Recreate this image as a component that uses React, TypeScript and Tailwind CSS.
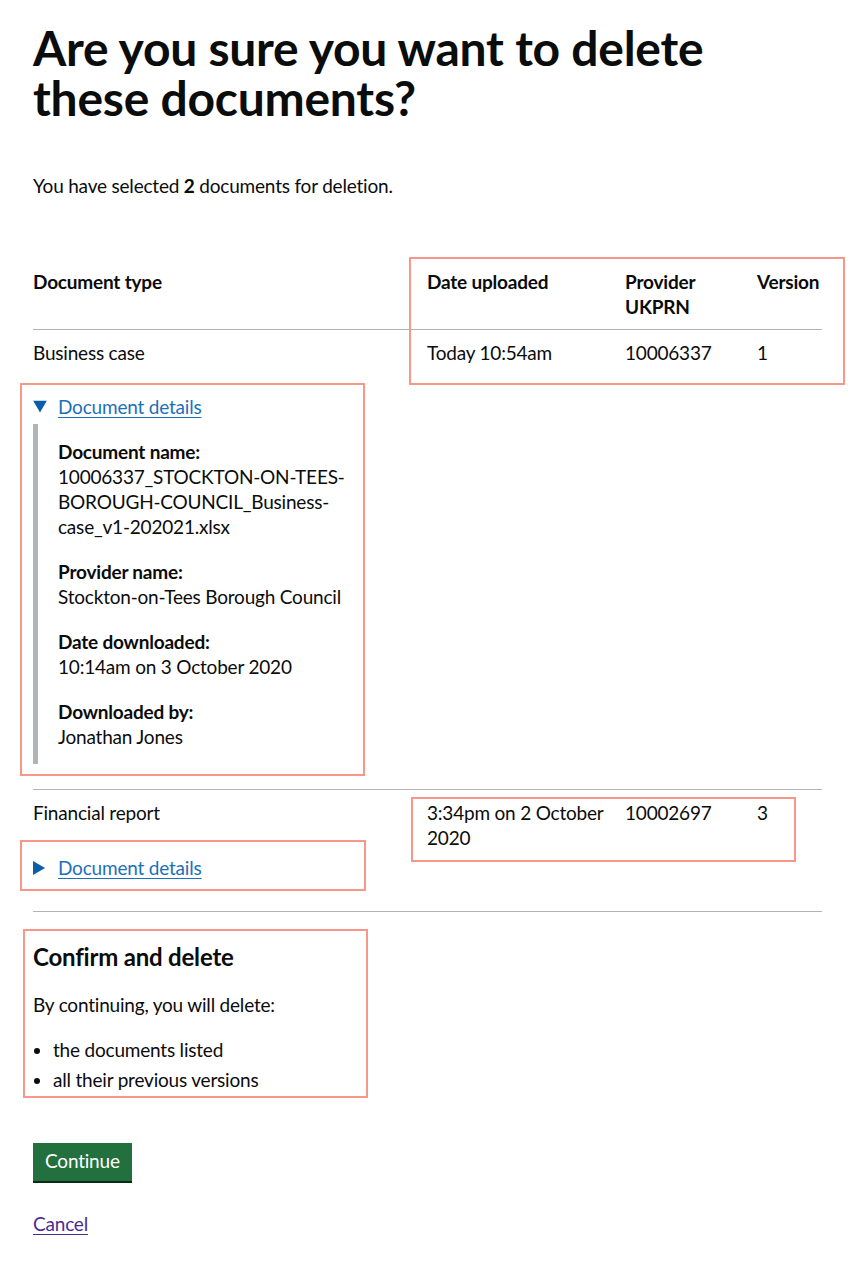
import React from "react";

function Summary({ open }: { open: boolean }) {
  return (
    <div className="relative flex h-[25px] items-center pl-[25px]">
      <span className="absolute left-0 top-1/2 -translate-y-1/2">
        {open ? (
          <svg width="14" height="13" viewBox="0 0 14 13" className="block">
            <polygon points="0,0 14,0 7,12.1" fill="#0b5ea6" />
          </svg>
        ) : (
          <svg width="13" height="14" viewBox="0 0 13 14" className="block">
            <polygon points="0,0 12.1,7 0,14" fill="#0b5ea6" />
          </svg>
        )}
      </span>
      <a href="#" className="text-[#1d70b8] underline decoration-1 underline-offset-[3px]">
        Document details
      </a>
    </div>
  );
}

function Field({ label, value, last }: { label: string; value: string; last?: boolean }) {
  return (
    <div className={last ? "" : "mb-[20px]"}>
      <div className="font-bold">{label}</div>
      <div>{value}</div>
    </div>
  );
}

export default function App() {
  return (
    <div className="relative min-h-[1266px] bg-white px-[33px] pt-[23px] font-['Lato','Liberation_Sans',sans-serif] text-[19px] leading-[25px] tracking-[-0.2px] text-[#0b0c0c]">
      <h1 className="mb-[50px] w-[700px] text-[48px] font-bold leading-[50px] tracking-[-0.25px]">
        Are you sure you want to delete these documents?
      </h1>

      <p className="mb-[61px]">
        You have selected <span className="font-bold">2</span> documents for deletion.
      </p>

      <div className="mb-[30px] w-[789px]">
        <div className="grid grid-cols-[394px_198px_132px_65px] border-b border-[#b1b4b6] pb-[10px] pt-[10px] font-bold">
          <div className="pr-[20px]">Document type</div>
          <div className="pr-[20px]">Date uploaded</div>
          <div className="pr-[20px]">
            Provider
            <br />
            UKPRN
          </div>
          <div className="whitespace-nowrap">Version</div>
        </div>

        <div className="grid grid-cols-[394px_198px_132px_65px] border-b border-[#b1b4b6] pt-[10px]">
          <div className="pr-[20px]">
            <div>Business case</div>
            <div className="mb-[25px] mt-[29px]">
              <Summary open />
              <div className="mt-[5px] border-l-[5px] border-[#b1b4b6] pb-[15px] pl-[20px] pr-[15px] pt-[15px] [overflow-wrap:anywhere]">
                <Field
                  label="Document name:"
                  value="10006337_STOCKTON-ON-TEES-BOROUGH-COUNCIL_Business-case_v1-202021.xlsx"
                />
                <Field label="Provider name:" value="Stockton-on-Tees Borough Council" />
                <Field label="Date downloaded:" value="10:14am on 3 October 2020" />
                <Field label="Downloaded by:" value="Jonathan Jones" last />
              </div>
            </div>
          </div>
          <div className="pr-[20px]">Today 10:54am</div>
          <div className="pr-[20px]">10006337</div>
          <div>1</div>
        </div>

        <div className="grid grid-cols-[394px_198px_132px_65px] border-b border-[#b1b4b6] pt-[10px]">
          <div className="pr-[20px]">
            <div>Financial report</div>
            <div className="mb-[31px] mt-[30px]">
              <Summary open={false} />
            </div>
          </div>
          <div className="pr-[14px]">3:34pm on 2 October 2020</div>
          <div className="pr-[20px]">10002697</div>
          <div>3</div>
        </div>
      </div>

      <h2 className="mb-[20px] text-[24px] font-bold leading-[30px]">Confirm and delete</h2>
      <p className="mb-[20px]">By continuing, you will delete:</p>
      <ul className="mb-[51px] list-disc pl-[20px]">
        <li className="mb-[5px]">the documents listed</li>
        <li>all their previous versions</li>
      </ul>

      <button className="mb-[30px] block border-2 border-transparent bg-[#23703f] px-[10px] pb-[9px] pt-[6px] text-[19px] leading-[19px] text-white shadow-[0_2px_0_#0b2b19]">
        Continue
      </button>

      <a href="#" className="text-[#4c2c92] underline decoration-1 underline-offset-[3px]">
        Cancel
      </a>

      <div className="pointer-events-none absolute left-[409px] top-[257px] h-[128px] w-[436px] border-2 border-[#f89787]" />
      <div className="pointer-events-none absolute left-[20px] top-[383px] h-[393px] w-[345px] border-2 border-[#f89787]" />
      <div className="pointer-events-none absolute left-[411px] top-[797px] h-[65px] w-[385px] border-2 border-[#f89787]" />
      <div className="pointer-events-none absolute left-[20px] top-[840px] h-[51px] w-[346px] border-2 border-[#f89787]" />
      <div className="pointer-events-none absolute left-[23px] top-[929px] h-[169px] w-[345px] border-2 border-[#f89787]" />
    </div>
  );
}
